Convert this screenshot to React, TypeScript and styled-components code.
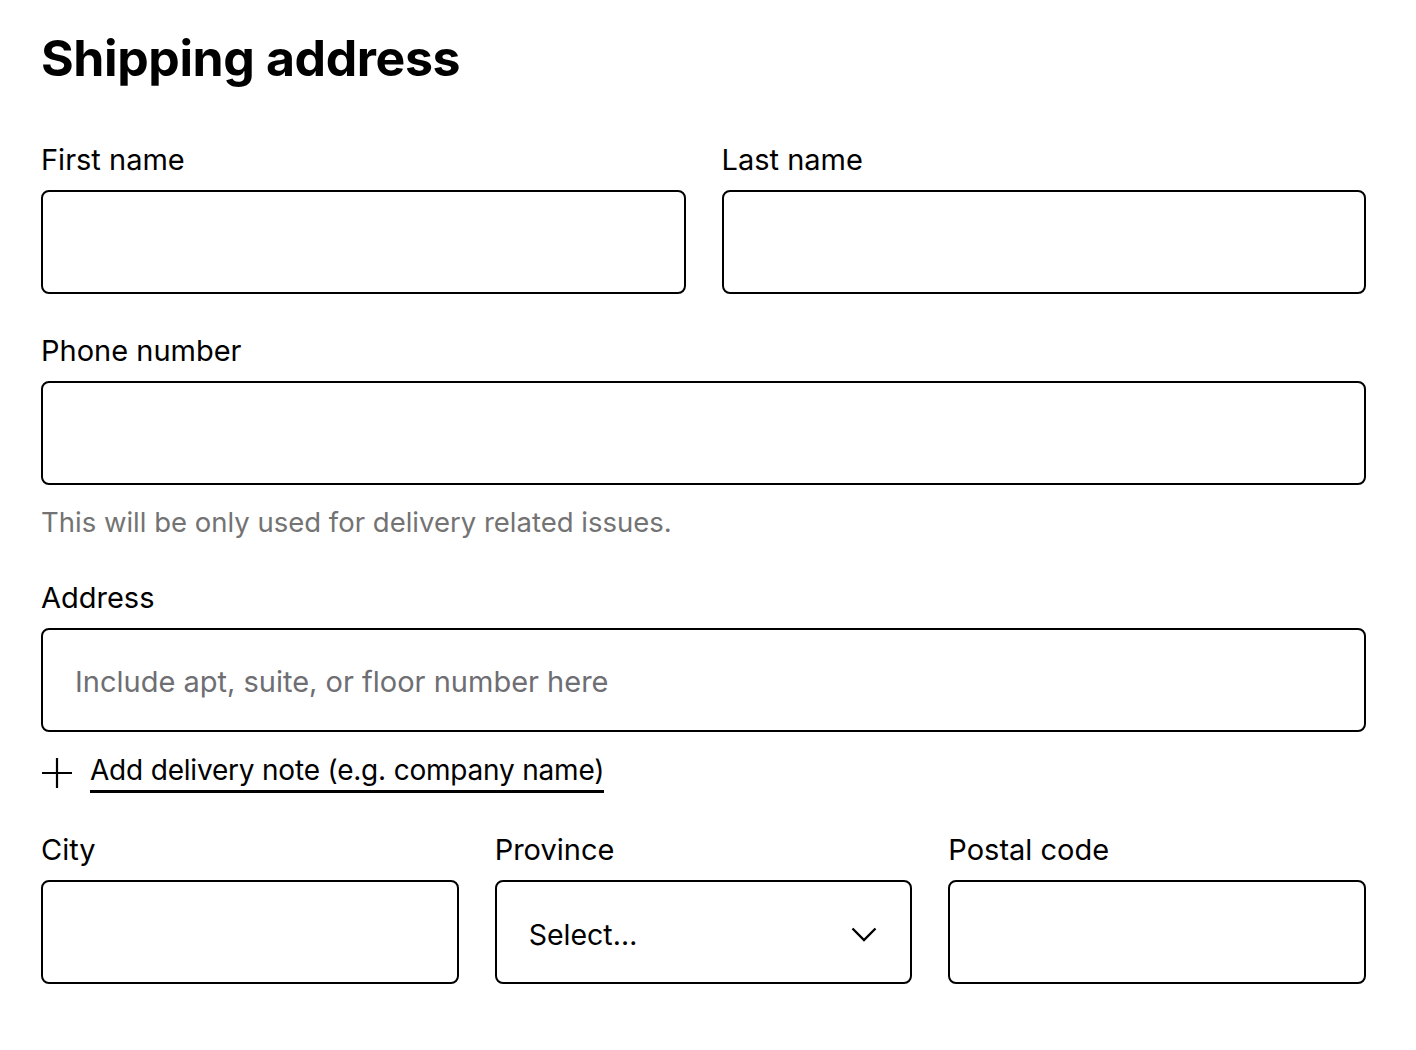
import React from "react";
import styled, { createGlobalStyle } from "styled-components";

const Global = createGlobalStyle`
  * { box-sizing: border-box; }
  body {
    margin: 0;
    background: #ffffff;
    font-family: Inter, "Noto Sans", "Liberation Sans", sans-serif;
    color: #000000;
  }
`;

const Page = styled.div`
  padding: 28px 50px 40px 41px;
`;

const Title = styled.h1`
  margin: 0 0 54px 0;
  font-size: 50px;
  line-height: 60px;
  font-weight: 700;
  letter-spacing: -0.4px;
`;

const Form = styled.form`
  display: flex;
  flex-direction: column;
`;

const Row = styled.div<{ $cols: number; $mt?: number }>`
  display: grid;
  grid-template-columns: repeat(${(p) => p.$cols}, 1fr);
  column-gap: 36px;
  margin-top: ${(p) => p.$mt ?? 0}px;
`;

const Field = styled.div`
  display: flex;
  flex-direction: column;
`;

const Label = styled.label`
  font-size: 29px;
  line-height: 36px;
  font-weight: 400;
  margin-bottom: 12px;
`;

const Input = styled.input`
  height: 104px;
  width: 100%;
  border: 2px solid #000;
  border-radius: 8px;
  padding: 2px 32px 0 32px;
  font-family: inherit;
  font-size: 29px;
  color: #000;
  background: #fff;
  outline: none;
  &::placeholder {
    color: #6e6e73;
  }
`;

const Help = styled.p`
  margin: 20px 0 0 0;
  font-size: 27.5px;
  line-height: 34px;
  color: #737373;
`;

const SelectBox = styled.button`
  height: 104px;
  width: 100%;
  border: 2px solid #000;
  border-radius: 8px;
  padding: 4px 32px 0 32px;
  background: #fff;
  display: flex;
  align-items: center;
  justify-content: space-between;
  font-family: inherit;
  font-size: 28.5px;
  color: #000;
  cursor: pointer;
`;

const AddNote = styled.button`
  display: flex;
  align-items: center;
  gap: 17px;
  background: none;
  border: none;
  padding: 0;
  margin-top: 20px;
  font-family: inherit;
  cursor: pointer;
  align-self: flex-start;
`;

const NoteText = styled.span`
  font-size: 28px;
  line-height: 36px;
  letter-spacing: -0.2px;
  color: #000;
  padding-bottom: 2px;
  border-bottom: 3px solid #000;
`;

const Plus = () => (
  <svg width="32" height="32" viewBox="0 0 32 32" fill="none">
    <path d="M16 1v30M1 16h30" stroke="#000" strokeWidth="2.2" />
  </svg>
);

const Chevron = () => (
  <svg width="28" height="28" viewBox="0 0 28 28" fill="none">
    <path d="M2.5 8.5l11.5 11.5 11.5-11.5" stroke="#000" strokeWidth="2.4" />
  </svg>
);

export default function App() {
  return (
    <>
      <Global />
      <Page>
        <Title>Shipping address</Title>
        <Form onSubmit={(e) => e.preventDefault()}>
          <Row $cols={2}>
            <Field>
              <Label>First name</Label>
              <Input />
            </Field>
            <Field>
              <Label>Last name</Label>
              <Input />
            </Field>
          </Row>
          <Row $cols={1} $mt={39}>
            <Field>
              <Label>Phone number</Label>
              <Input />
              <Help>This will be only used for delivery related issues.</Help>
            </Field>
          </Row>
          <Row $cols={1} $mt={41}>
            <Field>
              <Label>Address</Label>
              <Input placeholder="Include apt, suite, or floor number here" />
            </Field>
          </Row>
          <AddNote type="button">
            <Plus />
            <NoteText>Add delivery note (e.g. company name)</NoteText>
          </AddNote>
          <Row $cols={3} $mt={39}>
            <Field>
              <Label>City</Label>
              <Input />
            </Field>
            <Field>
              <Label>Province</Label>
              <SelectBox type="button">
                <span>Select…</span>
                <Chevron />
              </SelectBox>
            </Field>
            <Field>
              <Label>Postal code</Label>
              <Input />
            </Field>
          </Row>
        </Form>
      </Page>
    </>
  );
}
